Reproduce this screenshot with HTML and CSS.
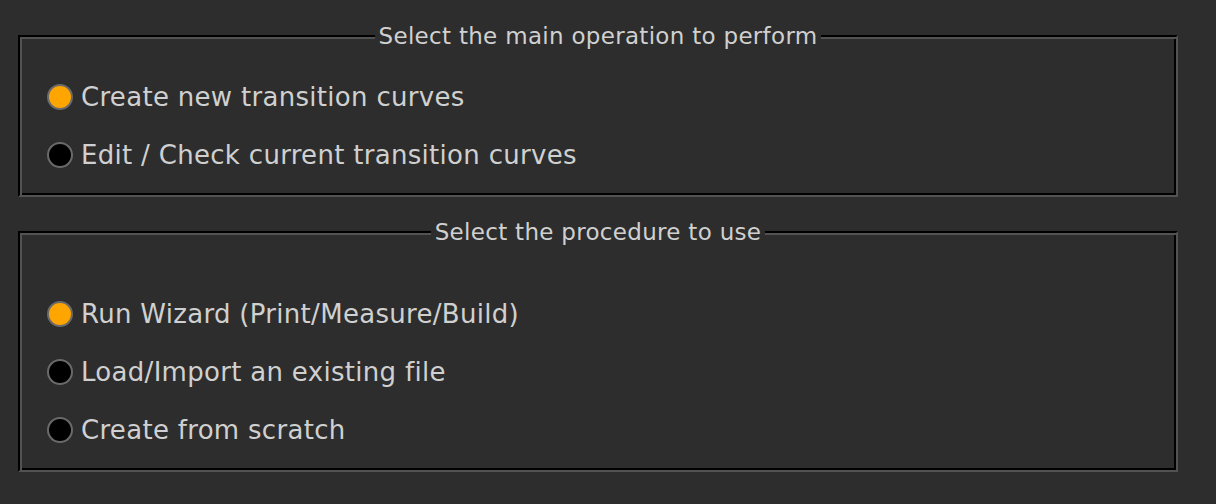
FILE: index.html
```html
<!DOCTYPE html>
<html lang="en">
<head>
    <meta charset="UTF-8">
    <title>Transition Curves</title>
    <link rel="stylesheet" href="styles.css">
</head>
<body>
    <div class="panel">
        <fieldset class="group">
            <legend>Select the main operation to perform</legend>
            <label class="option"><input type="radio" name="operation" checked> Create new transition curves</label>
            <label class="option"><input type="radio" name="operation"> Edit / Check current transition curves</label>
        </fieldset>

        <fieldset class="group procedure">
            <legend>Select the procedure to use</legend>
            <label class="option"><input type="radio" name="procedure" checked> Run Wizard (Print/Measure/Build)</label>
            <label class="option"><input type="radio" name="procedure"> Load/Import an existing file</label>
            <label class="option"><input type="radio" name="procedure"> Create from scratch</label>
        </fieldset>
    </div>
</body>
</html>
```

FILE: styles.css
```css
body {
    margin: 0;
    background: #2d2d2d;
    color: #d0d0d0;
    font-family: "DejaVu Sans", Verdana, sans-serif;
}

.panel {
    display: flex;
    flex-direction: column;
    gap: 21px;
    padding: 22px 38px 0 18px;
}

.group {
    margin: 0;
    padding: 19px 27px 11px;
    min-width: 0;
    border: 2px solid;
    border-color: #000 #525252 #525252 #000;
    box-shadow: inset 2px 2px 0 #525252, inset -2px -2px 0 #000;
}

.group legend {
    margin: 0 auto;
    padding: 1px 4px 0;
    background: #2d2d2d;
    font-size: 23px;
    line-height: 26px;
    letter-spacing: 0.3px;
}

.procedure {
    padding-top: 40px;
}

.option {
    display: flex;
    align-items: center;
    gap: 8px;
    height: 58px;
    font-size: 26px;
    letter-spacing: 0.3px;
    cursor: pointer;
}

.option input {
    appearance: none;
    margin: 0;
    width: 26px;
    height: 26px;
    border-radius: 50%;
    border: 2px solid #6a6a6a;
    background: #000;
}

.option input:checked {
    background: #ffa500;
}
```
